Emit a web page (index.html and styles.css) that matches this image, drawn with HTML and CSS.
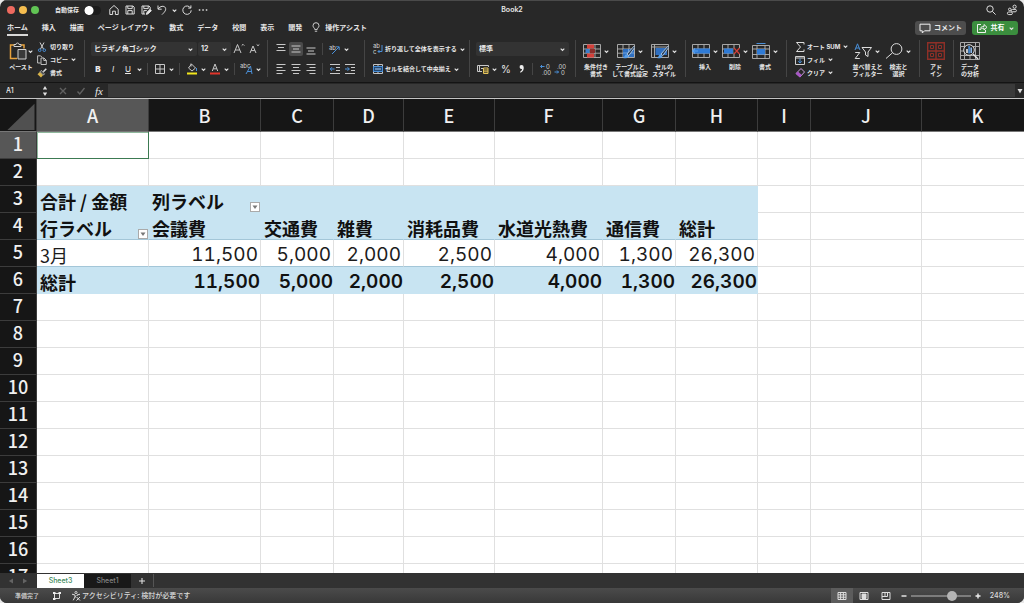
FILE: index.html
```html
<!DOCTYPE html>
<html lang="ja">
<head>
<meta charset="utf-8">
<title>Book2</title>
<link rel="stylesheet" href="styles.css">
</head>
<body>
<svg class="defs" aria-hidden="true">
  <symbol id="chev" viewBox="0 0 7 7"><path d="M1.7 2.6 3.5 4.4 5.3 2.6" fill="none" stroke="#e4e4e4" stroke-width="1.1"/></symbol>
  <symbol id="grid" viewBox="0 0 18 16"><path d="M.5 1.5h17v13H.5zM.5 6h17M.5 10.2h17M6 1.5v13M12 1.5v13" fill="none" stroke="#b4b4b4" stroke-width=".9"/></symbol>
</svg>
<div class="app">
  <header class="titlebar">
    <div class="title-left">
      <span class="light red"></span><span class="light yellow"></span><span class="light green"></span>
      <label class="autosave" for="autosave">自動保存</label>
      <input class="toggle" type="checkbox" id="autosave">
      <button class="tb" aria-label="ホーム"><svg viewBox="0 0 12 12"><path d="M1.8 5.3 6 1.5l4.2 3.8v5.2H7.4V7.2H4.6v3.3H1.8z"/></svg></button>
      <button class="tb" aria-label="保存"><svg viewBox="0 0 12 12"><path d="M2 2h7l1.2 1.2V10H2zM3.8 2v2.6h4.4V2M3.8 10V6.6h4.4V10"/></svg></button>
      <button class="tb" aria-label="名前を付けて保存"><svg viewBox="0 0 12 12"><path d="M5 10H2V2h7l1.2 1.2v2M3.8 2v2.6h4.4V2M3.8 10V6.6h3"/><path d="m6.3 10.4.6-2L10 5.3l1.4 1.3-3.2 3.2z" fill="#e8e8e8"/></svg></button>
      <button class="tb" aria-label="元に戻す"><svg viewBox="0 0 12 12"><path d="M2 1.5v3.7h3.7M2.2 5C4.2 1.8 8.2 1.6 9.3 3.6c1.2 2.2-.5 4.3-3.3 7"/></svg></button>
      <svg class="chev"><use href="#chev"/></svg>
      <button class="tb" aria-label="やり直し"><svg viewBox="0 0 12 12"><path d="M9.9 1.4v2.7H7.2M9.6 4A4.2 4.2 0 1 0 10.2 6.3"/></svg></button>
      <button class="tb" aria-label="その他"><svg viewBox="0 0 12 12"><path d="M1.8 6h1.5M5.3 6h1.5M8.800 6h1.500" stroke-width="1.5"/></svg></button>
    </div>
    <h1 class="doc">Book2</h1>
    <div class="title-right">
      <button class="tb" aria-label="検索"><svg viewBox="0 0 12 12"><circle cx="5" cy="5" r="3.2"/><path d="m7.4 7.4 3.2 3.2"/></svg></button>
      <button class="tb" aria-label="共同編集"><svg viewBox="0 0 12 12"><circle cx="8.6" cy="2.7" r="1.6"/><circle cx="3.8" cy="5.4" r="1.3"/><rect x="5.4" y="5.4" width="5" height="2.4" rx="1.2"/><rect x="1.4" y="8" width="5" height="2.6" rx="1.3"/></svg></button>
    </div>
  </header>

  <nav class="tabs">
    <a class="tab active" href="#home">ホーム</a>
    <a class="tab" href="#insert">挿入</a>
    <a class="tab" href="#draw">描画</a>
    <a class="tab" href="#layout">ページ レイアウト</a>
    <a class="tab" href="#formulas">数式</a>
    <a class="tab" href="#data">データ</a>
    <a class="tab" href="#review">校閲</a>
    <a class="tab" href="#view">表示</a>
    <a class="tab" href="#dev">開発</a>
    <a class="tab assist" href="#assist"><svg viewBox="0 0 8 11"><path d="M2.7 7.4C2.7 6 1 5.500 1 3.700a3 3 0 0 1 6 0c0 1.800-1.700 2.300-1.700 3.700zM2.800 9.200h2.400"/></svg>操作アシスト</a>
    <span class="fill"></span>
    <button class="pill comment"><svg viewBox="0 0 12 11"><path d="M1 1.200h10v6.600H5.500L3.300 10V7.800H1z"/></svg>コメント</button>
    <button class="pill share"><svg viewBox="0 0 12 11"><path d="M5 1.500H1.500v8h8V7M3.800 7C4 4.500 5.500 3.500 8 3.500V1.500L11 4.300 8 7V5.200C6 5.200 5 5.600 3.800 7z"/></svg>共有<svg class="chev"><use href="#chev"/></svg></button>
  </nav>

  <section class="ribbon" aria-label="ホーム">
    <div class="group clip">
      <button class="big"><span class="pic"><svg class="paste" viewBox="0 0 18 18"><path d="M6 3H1.500v13.500H8M11 3h4v3.500" fill="none" stroke="#e8a33d" stroke-width="1.500"/><path d="M5 4.500V2.500h2a1.500 1.500 0 0 1 3 0h2v2z" fill="#282828" stroke="#d0d0d0"/><path d="M9 7.500h8v9.500H9z" fill="#3a3a3a" stroke="#d0d0d0"/></svg><svg class="chev"><use href="#chev"/></svg></span><span class="cap">ペースト</span></button>
      <div class="stack">
        <button class="line"><svg class="mini" viewBox="0 0 10 10"><path d="M3 .5 6.500 7M7 .5 3.500 7" fill="none" stroke="#d0d0d0"/><circle cx="2.700" cy="8.200" r="1.300" fill="none" stroke="#4a90d9"/><circle cx="7.300" cy="8.200" r="1.300" fill="none" stroke="#4a90d9"/></svg>切り取り</button>
        <button class="line"><svg class="mini" viewBox="0 0 10 10"><path d="M3.500 8H.6V.8h3l1.500 1.500M4 3h3l2.300 2.300V9.500H4zM6.800 3v2.500h2.500" fill="none" stroke="#cfcfcf" stroke-width=".9"/></svg>コピー<svg class="chev"><use href="#chev"/></svg></button>
        <button class="line"><svg class="mini" viewBox="0 0 10 10"><path d="m9.300.8-3 3" stroke="#ddd" stroke-width="1.600"/><path d="M4.200 2.500 7.500 5.800 6.400 7 3 3.700z" fill="#282828" stroke="#ddd" stroke-width=".8"/><path d="M2.700 4 6 7.200 4 9.600.5 6.200z" fill="#d9b44a"/></svg>書式</button>
      </div>
    </div>

    <div class="group rows">
      <div class="row">
        <span class="combo name"><select aria-label="フォント"><option>ヒラギノ角ゴシック</option></select><svg class="chev"><use href="#chev"/></svg></span>
        <span class="combo size"><select aria-label="サイズ"><option>12</option></select><svg class="chev"><use href="#chev"/></svg></span>
        <button class="ib" aria-label="フォントを大きく"><svg viewBox="0 0 14 14"><path d="M2 11 5.500 2.500 9 11M3.300 8h4.400M9.700 3.600 11 2.300l1.300 1.300"/></svg></button>
        <button class="ib" aria-label="フォントを小さく"><svg viewBox="0 0 14 14"><path d="M3 11 6 4l3 7M4.100 8.600h3.800M9.700 2.500 11 3.700l1.300-1.200"/></svg></button>
      </div>
      <div class="row">
        <button class="ib"><b>B</b></button>
        <button class="ib"><i>I</i></button>
        <button class="ib"><u>U</u></button>
        <svg class="chev"><use href="#chev"/></svg>
        <span class="sep"></span>
        <button class="ib" aria-label="罫線"><svg viewBox="0 0 14 14"><path d="M2.500 2.500h9v9h-9zM7 2.500v9M2.500 7h9"/></svg></button>
        <svg class="chev"><use href="#chev"/></svg>
        <span class="sep"></span>
        <button class="ib" aria-label="塗りつぶし"><svg viewBox="0 0 14 14"><path d="m6.500 2 4 4-3.500 3L3.500 6zM6 1.500v3"/><path d="M11.500 6v3" stroke="#4a90d9"/><path d="M2 11.500h10" stroke="#f2e61c" stroke-width="2"/></svg></button>
        <svg class="chev"><use href="#chev"/></svg>
        <button class="ib" aria-label="文字の色"><svg viewBox="0 0 14 14"><path d="M4.300 9 7 2l2.700 7M5.200 6.800h3.600"/><path d="M2 11.500h10" stroke="#e0352b" stroke-width="2"/></svg></button>
        <svg class="chev"><use href="#chev"/></svg>
        <span class="sep"></span>
        <button class="ib" aria-label="ふりがな"><svg viewBox="0 0 14 14"><text x="0" y="6" class="tiny">abc</text><path d="M6 12 10.500 4l1.500 8M7.500 9.500h4" stroke="#4a90d9"/></svg></button>
        <svg class="chev"><use href="#chev"/></svg>
      </div>
    </div>

    <div class="group rows">
      <div class="row">
        <button class="ib" aria-label="上揃え"><svg viewBox="0 0 14 14"><path d="M2.500 2.500h9M4 5.500h6M2.500 8.500h9"/></svg></button>
        <button class="ib on" aria-label="上下中央揃え"><svg viewBox="0 0 14 14"><path d="M2.500 4h9M4 7h6M2.500 10h9"/></svg></button>
        <button class="ib" aria-label="下揃え"><svg viewBox="0 0 14 14"><path d="M2.500 6h9M4 9h6M2.500 12h9"/></svg></button>
        <span class="sep"></span>
        <button class="ib" aria-label="方向"><svg viewBox="0 0 14 14"><text x="1" y="8" class="tiny">ab</text><path d="m4 12 7-7M8 4.800h3.200V8" stroke="#4a90d9"/></svg></button>
        <svg class="chev"><use href="#chev"/></svg>
      </div>
      <div class="row">
        <button class="ib" aria-label="左揃え"><svg viewBox="0 0 14 14"><path d="M2.500 2.500h9M2.500 5.500h6M2.500 8.500h9M2.500 11.500h6"/></svg></button>
        <button class="ib" aria-label="中央揃え"><svg viewBox="0 0 14 14"><path d="M2.500 2.500h9M4 5.500h6M2.500 8.500h9M4 11.500h6"/></svg></button>
        <button class="ib" aria-label="右揃え"><svg viewBox="0 0 14 14"><path d="M2.500 2.500h9M5.500 5.500h6M2.500 8.500h9M5.500 11.500h6"/></svg></button>
        <span class="sep"></span>
        <button class="ib" aria-label="インデント解除"><svg viewBox="0 0 14 14"><path d="M2 2.500h10M8 5.500h4M8 8.500h4M2 11.500h10"/><path d="M6.500 7H2.200M4 5.200 2.200 7 4 8.800" stroke="#4a90d9"/></svg></button>
        <button class="ib" aria-label="インデント"><svg viewBox="0 0 14 14"><path d="M2 2.500h10M8 5.500h4M8 8.500h4M2 11.500h10"/><path d="M2 7h4.300M4.500 5.200 6.300 7 4.500 8.800" stroke="#4a90d9"/></svg></button>
      </div>
    </div>

    <div class="group rows wrap">
      <button class="line"><svg class="ico" viewBox="0 0 14 14"><text x="2" y="6" class="tiny">ab</text><text x="2" y="12" class="tiny">c</text><path d="M11 3v6.500H7M8.500 8 7 9.500 8.500 11" fill="none" stroke="#4a90d9"/></svg>折り返して全体を表示する<svg class="chev"><use href="#chev"/></svg></button>
      <button class="line"><svg class="ico" viewBox="0 0 14 14"><path d="M2.500 2.500h9v9h-9zM7 2.500v2M7 9.500v2" fill="none" stroke="#c4c4c4"/><path d="M2.500 4.500h9v5h-9z" fill="#23476f" stroke="#4a90d9"/><path d="M4 7h6" stroke="#a9cdf5"/></svg>セルを結合して中央揃え<svg class="chev"><use href="#chev"/></svg></button>
    </div>

    <div class="group rows">
      <div class="row">
        <span class="combo format"><select aria-label="表示形式"><option>標準</option></select><svg class="chev"><use href="#chev"/></svg></span>
      </div>
      <div class="row">
        <button class="ib" aria-label="通貨"><svg viewBox="0 0 14 14"><path d="M6 9.500H1.500v-6h11V5M3.500 3.500v6M5 6.500h2"/><path d="M7.500 6h4.500v5.500H7.500zM7.500 8h4.500M7.500 9.800h4.500" stroke="#e6c55a"/></svg></button>
        <svg class="chev"><use href="#chev"/></svg>
        <button class="ib" aria-label="パーセント"><span class="pct">%</span></button>
        <button class="ib" aria-label="桁区切り"><svg viewBox="0 0 14 14"><path d="M7.500 3a1.900 1.900 0 1 0 .6 3.700C8 8 7.300 9 6 9.800l.5.900C9 9.500 10 7.500 9.700 5.200A2.200 2.200 0 0 0 7.500 3z" fill="#eee" stroke="none"/></svg></button>
        <span class="sep"></span>
        <button class="ib" aria-label="小数点以下を増やす"><svg viewBox="0 0 14 14"><path d="M6.500 4.500h-4M4 3 2.500 4.500 4 6" stroke="#4a90d9"/><text x="8" y="7" class="tiny">0</text><text x="4" y="13" class="tiny">.00</text></svg></button>
        <button class="ib" aria-label="小数点以下を減らす"><svg viewBox="0 0 14 14"><path d="M1.500 10h4M4 8.500 5.500 10 4 11.500" stroke="#4a90d9"/><text x="4" y="7" class="tiny">.00</text><text x="8" y="13" class="tiny">0</text></svg></button>
      </div>
    </div>

    <div class="group styles">
      <button class="big"><span class="pic"><svg class="art" viewBox="0 0 18 16"><use href="#grid"/><path d="M4 1.500h7v4H4zM4 10.500h7v4H4z" fill="#d4403a"/><path d="M2.500 6h4v4h-4z" fill="#3f7fca"/><path d="M7 6h5v4H7z" fill="#8d2d2b"/></svg><svg class="chev"><use href="#chev"/></svg></span><span class="cap">条件付き<br>書式</span></button>
      <button class="big"><span class="pic"><svg class="art" viewBox="0 0 18 16"><use href="#grid"/><path d="M6 6h11v8H6z" fill="#2f6fc0"/><path d="M6 10h11M11.500 6v8" stroke="#8ab7ea" stroke-width=".7"/><path d="M16.800 3.300 10 11l1.800 1.600 6-8.200z" fill="#2a3f58" stroke="#c4daf2" stroke-width=".8"/><path d="M9.500 11.300c-2 .2-1.500 2.700-3.500 3.700 2.500.7 5.300.2 5.400-2z" fill="#5a9fe8"/></svg><svg class="chev"><use href="#chev"/></svg></span><span class="cap">テーブルと<br>して書式設定</span></button>
      <button class="big"><span class="pic"><svg class="art" viewBox="0 0 18 16"><path d="M.5 1.500h17v13H.5zM.5 4h17M3.500 1.500v13" fill="none" stroke="#b4b4b4" stroke-width=".9"/><path d="M4.500 5H16v7H4.500z" fill="#2f6fc0"/><path d="M16.800 3.300 10 11l1.800 1.600 6-8.200z" fill="#2a3f58" stroke="#c4daf2" stroke-width=".8"/><path d="M9.500 11.300c-2 .2-1.500 2.700-3.500 3.700 2.500.7 5.300.2 5.400-2z" fill="#5a9fe8"/></svg><svg class="chev"><use href="#chev"/></svg></span><span class="cap">セルの<br>スタイル</span></button>
    </div>

    <div class="group cells">
      <button class="big"><span class="pic"><svg class="art" viewBox="0 0 18 16"><use href="#grid"/><path d="M2 5.500h16v5H2z" fill="#2f7bd6"/><path d="M6 8H.5M3 5.500.5 8 3 10.500" fill="none" stroke="#5aa0ee" stroke-width="1.200"/></svg><svg class="chev"><use href="#chev"/></svg></span><span class="cap">挿入</span></button>
      <button class="big"><span class="pic"><svg class="art" viewBox="0 0 18 16"><use href="#grid"/><path d="M2 5.500h9v5H2z" fill="#2f7bd6"/><path d="M11.500 5h6.500v6h-6.500z" fill="#282828"/><path d="m12 5 5.500 6M17.500 5 12 11" stroke="#d4403a" stroke-width="1.200"/></svg><svg class="chev"><use href="#chev"/></svg></span><span class="cap">削除</span></button>
      <button class="big"><span class="pic"><svg class="art" viewBox="0 0 18 16"><path d="M.5 2.500h17v13H.5zM.5 6h17M.5 11.500h17M5 2.500v13M13 2.500v13" fill="none" stroke="#b4b4b4" stroke-width=".9"/><path d="M5 6h8v5.500H5z" fill="#2f7bd6"/><path d="M4.500.5h9" stroke="#4a90d9"/></svg><svg class="chev"><use href="#chev"/></svg></span><span class="cap">書式</span></button>
    </div>

    <div class="group edit">
      <div class="stack">
        <button class="line"><svg class="ico" viewBox="0 0 14 14"><path d="M11 4.500V2.500H3.500L7.500 7l-4 4.500H11v-2" fill="none" stroke="#ddd"/></svg>オート SUM<svg class="chev"><use href="#chev"/></svg></button>
        <button class="line"><svg class="ico" viewBox="0 0 14 14"><path d="M2.500 3.500h9v8h-9zM2.500 5h9" fill="none" stroke="#cfcfcf"/><path d="M7 5.500v4.500M5.200 8.300 7 10l1.800-1.700" fill="none" stroke="#4a90d9"/></svg>フィル<svg class="chev"><use href="#chev"/></svg></button>
        <button class="line"><svg class="ico" viewBox="0 0 14 14"><path d="m8 2.500 3.500 3.500L7 11 3 7.500z" fill="none" stroke="#c9a0dc"/><path d="m5 5.500 3.800 3.600L7 11.500 2.800 7.800z" fill="#a855c7"/></svg>クリア<svg class="chev"><use href="#chev"/></svg></button>
      </div>
      <button class="big"><span class="pic"><svg class="art" viewBox="0 0 18 16"><path d="M1 7 3.500.8 6 7M1.800 5h3.400" fill="none" stroke="#4a90d9"/><path d="M1.200 9.500h4.600l-4.600 6h4.600" fill="none" stroke="#ddd"/><path d="M8 4.500h9.500l-3.500 4.500v4.500l-2.500-1.500V9z" fill="none" stroke="#ddd"/></svg><svg class="chev"><use href="#chev"/></svg></span><span class="cap">並べ替えと<br>フィルター</span></button>
      <button class="big"><span class="pic"><svg class="art" viewBox="0 0 18 16"><circle cx="11.500" cy="6" r="5.400" fill="none" stroke="#ddd"/><path d="M7.500 9.800 1 15.500" stroke="#ddd"/></svg><svg class="chev"><use href="#chev"/></svg></span><span class="cap">検索と<br>選択</span></button>
    </div>

    <div class="group solo">
      <button class="big"><span class="pic"><svg class="tile" viewBox="0 0 18 18"><path d="M.7.7h16.600v16.600H.7zM9 1v16M1 9h16" fill="none" stroke="#8f2f27" stroke-width="1.400"/><path d="M3.500 3.500h3v3h-3zM11.500 3.500h3v3h-3zM3.500 11.500h3v3h-3zM11.500 11.500h3v3h-3z" fill="none" stroke="#8f2f27"/></svg></span><span class="cap">アド<br>イン</span></button>
    </div>
    <div class="group solo">
      <button class="big"><span class="pic"><svg class="tile wide" viewBox="0 0 20 18"><path d="M.5.5h19v17H.5zM.5 4.500h19M.5 13.500h19M4.500.5v17M15.500.5v17M.5 9h4M10 13.500v4" fill="none" stroke="#a8a8a8"/><circle cx="9" cy="8" r="5.300" fill="#282828" stroke="#e4e4e4"/><path d="m13 12 5 5" stroke="#e4e4e4" stroke-width="1.400"/><path d="M6.200 7h1.600v4H6.200z" fill="#eee"/><path d="M8.300 4h1.600v7.500H8.300z" fill="#4a90d9"/><path d="M10.400 5.500H12V11h-1.600z" fill="#8ab7ea"/></svg></span><span class="cap">データ<br>の分析</span></button>
    </div>
  </section>

  <div class="formula">
    <input class="namebox" aria-label="名前ボックス" value="A1">
    <svg class="step" viewBox="0 0 6 12"><path d="M.8 4.500 3 1l2.200 3.500zM.8 7.500 3 11l2.200-3.500z" fill="#e0e0e0"/></svg>
    <button class="fb" aria-label="キャンセル"><svg viewBox="0 0 10 10"><path d="m2 2 6 6M8 2 2 8" stroke="#606060" stroke-width="1.400"/></svg></button>
    <button class="fb" aria-label="入力"><svg viewBox="0 0 10 10"><path d="m1.500 5.500 2.300 2.500L8.500 2" fill="none" stroke="#606060" stroke-width="1.400"/></svg></button>
    <button class="fb fx">fx</button>
    <input class="entry" aria-label="数式バー">
    <button class="drop" aria-label="展開"><svg viewBox="0 0 6 6"><path d="M.5 1h5L3 5.500z" fill="#ddd"/></svg></button>
  </div>

  <main class="sheet">
    <table>
      <colgroup><col class="c0"><col class="ca"><col class="ca"><col class="cc"><col class="cd"><col class="ce"><col class="cf"><col class="cc"><col class="ch"><col class="ci"><col class="cj"><col class="ca"></colgroup>
      <thead>
        <tr><th class="corner" aria-label="すべて選択"><svg viewBox="0 0 37 33"><path d="M35 5v27H7z" fill="#505050"/></svg></th><th class="sel">A</th><th>B</th><th>C</th><th>D</th><th>E</th><th>F</th><th>G</th><th>H</th><th>I</th><th>J</th><th>K</th></tr>
      </thead>
      <tbody>
        <tr><th class="sel">1</th><td class="cursor"></td><td><td><td><td><td><td><td><td><td><td></tr>
        <tr><th>2</th><td><td><td><td><td><td><td><td><td><td><td></tr>
        <tr class="pivot"><th>3</th><td>合計 / 金額</td><td><div class="lab">列ラベル<button class="filter" aria-label="列ラベルのフィルター"><svg viewBox="0 0 8 8"><path d="M1.500 2.500h5L4 6z" fill="#777"/></svg></button></div></td><td><td><td><td><td><td></td><td class="off"><td class="off"><td class="off"></tr>
        <tr class="pivot under"><th>4</th><td><div class="lab">行ラベル<button class="filter" aria-label="行ラベルのフィルター"><svg viewBox="0 0 8 8"><path d="M1.500 2.500h5L4 6z" fill="#777"/></svg></button></div></td><td>会議費</td><td>交通費</td><td>雑費</td><td>消耗品費</td><td>水道光熱費</td><td>通信費</td><td>総計</td><td class="off"><td class="off"><td class="off"></tr>
        <tr class="plain under"><th>5</th><td>3月</td><td class="n">11,500</td><td class="n">5,000</td><td class="n">2,000</td><td class="n">2,500</td><td class="n">4,000</td><td class="n">1,300</td><td class="n">26,300</td><td class="off"><td class="off"><td class="off"></tr>
        <tr class="pivot"><th>6</th><td>総計</td><td class="n">11,500</td><td class="n">5,000</td><td class="n">2,000</td><td class="n">2,500</td><td class="n">4,000</td><td class="n">1,300</td><td class="n">26,300</td><td class="off"><td class="off"><td class="off"></tr>
        <tr><th>7</th><td><td><td><td><td><td><td><td><td><td><td></tr>
        <tr><th>8</th><td><td><td><td><td><td><td><td><td><td><td></tr>
        <tr><th>9</th><td><td><td><td><td><td><td><td><td><td><td></tr>
        <tr><th>10</th><td><td><td><td><td><td><td><td><td><td><td></tr>
        <tr><th>11</th><td><td><td><td><td><td><td><td><td><td><td></tr>
        <tr><th>12</th><td><td><td><td><td><td><td><td><td><td><td></tr>
        <tr><th>13</th><td><td><td><td><td><td><td><td><td><td><td></tr>
        <tr><th>14</th><td><td><td><td><td><td><td><td><td><td><td></tr>
        <tr><th>15</th><td><td><td><td><td><td><td><td><td><td><td></tr>
        <tr><th>16</th><td><td><td><td><td><td><td><td><td><td><td></tr>
        <tr><th>17</th><td><td><td><td><td><td><td><td><td><td><td></tr>
      </tbody>
    </table>
  </main>

  <div class="sheettabs">
    <button class="nav" aria-label="前のシート"><svg viewBox="0 0 6 6"><path d="M5 .5v5L.8 3z" fill="#646464"/></svg></button>
    <button class="nav" aria-label="次のシート"><svg viewBox="0 0 6 6"><path d="M1 .5v5L5.200 3z" fill="#646464"/></svg></button>
    <button class="st current">Sheet3</button>
    <button class="st">Sheet1</button>
    <button class="add" aria-label="シートを追加"><svg viewBox="0 0 8 8"><path d="M4 1v6M1 4h6" stroke="#ddd" stroke-width="1.100"/></svg></button>
  </div>

  <footer class="status">
    <span class="ready">準備完了</span>
    <svg class="si" viewBox="0 0 10 10"><path d="M2.500 2.500h5v5h-5z" fill="none" stroke="#ddd"/><path d="M1 1h2.500v2H1zM6.500 1H9v2H6.500zM1 7h2.500v2H1z" fill="#eee"/></svg>
    <button class="access"><svg class="si" viewBox="0 0 10 10"><circle cx="5" cy="1.600" r="1.100" fill="none" stroke="#ddd" stroke-width=".9"/><path d="M1 3.200 4 4v2L2.200 9.300M9 3.200 6 4v1M4 6l1-.5M5.500 6l3.500 3.500M9 6 5.500 9.500" fill="none" stroke="#ddd"/></svg>アクセシビリティ: 検討が必要です</button>
    <span class="fill"></span>
    <button class="vw on" aria-label="標準"><svg viewBox="0 0 10 10"><path d="M1 1.500h8v7H1zM1 3.800h8M1 6.200h8M3.600 1.500v7M6.400 1.500v7"/></svg></button>
    <button class="vw" aria-label="ページ レイアウト"><svg viewBox="0 0 10 10"><path d="M1 1.500h8v7H1z"/><path d="M3 3h4v4.500H3z" fill="#ddd"/></svg></button>
    <button class="vw" aria-label="改ページ プレビュー"><svg viewBox="0 0 10 10"><path d="M1 1.500h8v7H1zM4 1.500v4H1M6.500 1.500v4H4"/></svg></button>
    <button class="zb" aria-label="縮小"><svg viewBox="0 0 6 6"><path d="M.5 3h5" stroke="#eee" stroke-width="1.400"/></svg></button>
    <input class="zoom" type="range" aria-label="ズーム" min="0" max="100" value="72">
    <button class="zb" aria-label="拡大"><svg viewBox="0 0 6 6"><path d="M.5 3h5M3 .5v5" stroke="#eee" stroke-width="1.400"/></svg></button>
    <span class="pc">248%</span>
  </footer>
</div>
</body>
</html>
```
FILE: styles.css
```css
* { box-sizing: border-box; }
html, body { height: 100%; }
body {
  margin: 0;
  background: #e8e8e8;
  color: #e8e8e8;
  font: 500 7px/8px Inter, "Noto Sans CJK JP", sans-serif;
}
button, input, select { font: inherit; color: inherit; }
button {
  margin: 0;
  padding: 0;
  border: 0;
  background: none;
}
svg { display: block; flex: none; }
.defs { position: absolute; width: 0; height: 0; }
.fill { flex: 1; }
.chev { width: 7px; height: 7px; flex: none; }

.app {
  display: flex;
  flex-direction: column;
  height: 100vh;
  overflow: hidden;
  border-radius: 7px;
  background: #282828;
  white-space: nowrap;
}

/* Title bar */
.titlebar {
  display: grid;
  grid-template-columns: 1fr auto 1fr;
  align-items: center;
  height: 19px;
  border-top: 1px solid #4a4a4a;
}
.title-left, .title-right { display: flex; align-items: center; gap: 4px; }
.title-left { padding-left: 7px; }
.title-right { justify-content: flex-end; gap: 9px; padding-right: 6px; }
.light { width: 8px; height: 8px; border-radius: 50%; }
.red { background: #ee6a5f; }
.yellow { background: #f5bd4f; }
.green { background: #61c454; }
.autosave { margin-left: 12px; font-size: 6px; font-weight: 700; }
.toggle {
  appearance: none;
  width: 17px;
  height: 9px;
  margin: 0 3px 0 1px;
  border-radius: 5px;
  background: radial-gradient(circle at 5px 50%, #fff 4px, #1b1b1b 5px);
}
.tb { width: 12px; height: 12px; }
.tb svg { width: 12px; height: 12px; fill: none; stroke: #dcdcdc; }
.title-left .chev { margin: 0 -1px; }
.doc { margin: 0; font-size: 7px; font-weight: 600; }

/* Ribbon tabs */
.tabs {
  display: flex;
  align-items: center;
  gap: 14px;
  height: 18px;
  padding: 0 6px 0 7px;
}
.tab {
  height: 16px;
  padding-top: 4px;
  border-bottom: 2px solid transparent;
  color: #e8e8e8;
  font-weight: 700;
  text-decoration: none;
}
.tab.active { border-color: #d8d8d8; }
.assist { display: flex; gap: 5px; margin-left: -4px; }
.assist svg { width: 8px; height: 11px; margin-top: -2px; fill: none; stroke: #d0d0d0; }
.pill {
  display: flex;
  align-items: center;
  justify-content: center;
  gap: 3px;
  height: 14px;
  border-radius: 3px;
  font-weight: 700;
}
.pill > svg:first-child { width: 12px; height: 11px; fill: none; stroke: #f0f0f0; }
.comment { width: 51px; background: #4d4d4d; }
.share { width: 46px; margin-left: -8px; background: #3b8e3e; color: #fff; }

/* Ribbon */
.ribbon {
  display: grid;
  grid-template-columns: 84px 183px 97px 105px 106px 110px 101px 133px 34px 1fr;
  height: 45px;
  font-size: 6px;
  font-weight: 700;
}
.group {
  display: flex;
  min-width: 0;
  background: linear-gradient(#454545, #454545) 0 3px / 1px 37px no-repeat;
}
.clip { padding-left: 5px; background: none; }
.rows { flex-direction: column; gap: 6px; padding: 5px 0 0 7px; }
.row { display: flex; align-items: center; gap: 1px; height: 14px; }
.sep { width: 1px; height: 12px; margin: 0 4px 0 3px; background: #454545; }
.ib {
  display: flex;
  align-items: center;
  justify-content: center;
  width: 14px;
  height: 14px;
  font-size: 8px;
}
.ib svg { width: 14px; height: 14px; fill: none; stroke: #c8c8c8; }
.ib.on { border-radius: 2px; background: #4a4a4a; }
.ib i, .ib u { font-weight: 400; }
.ib .pct { font-size: 10px; font-weight: 400; }
.tiny { fill: #d4d4d4; stroke: none; font-size: 6px; font-weight: 400; }
.combo {
  display: flex;
  align-items: center;
  height: 14px;
  padding-right: 3px;
  border-radius: 2px;
  background: #333;
  font-size: 7px;
}
.combo select {
  flex: 1;
  min-width: 0;
  height: 14px;
  padding: 0 0 0 3px;
  border: 0;
  appearance: none;
  background: transparent;
}
.combo.name { width: 106px; }
.combo.size { width: 33px; }
.combo.format { width: 93px; }

.stack { display: flex; flex-direction: column; padding-top: 3px; }
.line { display: flex; align-items: center; height: 13px; text-align: left; }
.mini { width: 10px; height: 10px; margin-right: 3px; }
.ico { width: 14px; height: 14px; }
.line .chev { margin-left: 2px; }
.rows .line { height: 14px; }

.big {
  display: flex;
  flex-direction: column;
  align-items: center;
  width: 34px;
  padding-top: 5px;
}
.pic { display: flex; align-items: center; gap: 2px; height: 18px; }
.cap { margin-top: 3px; line-height: 7px; text-align: center; }
.art { width: 18px; height: 16px; }
.paste, .tile { width: 18px; height: 18px; }
.tile.wide { width: 20px; }
.clip .big { width: 32px; }
.clip .pic { gap: 0; }
.styles { padding-left: 4px; }
.cells { padding-left: 5px; }
.cells .big { width: 30px; }
.edit { padding-left: 7px; }
.edit .stack { width: 59px; }
.edit .big { width: 31px; }

/* Formula bar */
.formula {
  display: flex;
  align-items: center;
  height: 17px;
  border-top: 1px solid #141414;
  border-bottom: 1px solid #c4c4c4;
}
.namebox {
  width: 42px;
  height: 13px;
  padding: 0 0 0 6px;
  border: 0;
  background: none;
}
.step { width: 6px; height: 12px; margin-right: 6px; }
.fb { display: flex; justify-content: center; width: 18px; }
.fb svg { width: 10px; height: 10px; }
.fx { font: italic 11px/12px "Liberation Serif", serif; }
.entry {
  flex: 1;
  min-width: 0;
  height: 13px;
  border: 0;
  background: #3a3a3a;
}
.drop { width: 9px; }
.drop svg { width: 6px; height: 6px; margin: auto; }

/* Worksheet */
.sheet { flex: 1; min-height: 0; overflow: hidden; background: #fff; }
table {
  width: 1034px;
  table-layout: fixed;
  border-spacing: 0;
  font: 18px/22px "Noto Sans CJK JP", sans-serif;
}
.c0 { width: 37px; }
.ca { width: 112px; }
.cc { width: 73px; }
.cd { width: 70px; }
.ce { width: 91px; }
.cf { width: 108px; }
.ch { width: 82px; }
.ci { width: 53px; }
.cj { width: 111px; }
th {
  padding: 0 0 4px;
  border-right: 1px solid #3c3c3c;
  border-bottom: 1px solid #3c3c3c;
  background: #161616;
  color: #f0f0f0;
  font-weight: 500;
}
thead th { height: 33px; padding: 0; border-bottom-color: #777; }
th.sel { background: #575757; }
.corner svg { width: 37px; height: 32px; }
td {
  height: 27px;
  padding: 4px 0 0 3px;
  border-right: 1px solid #e0e0e0;
  border-bottom: 1px solid #e0e0e0;
  color: #1c1c1c;
}
.cursor { border-color: #3c7a52; box-shadow: inset 1px 1px #8fb89d; }
.pivot td:not(.off) {
  border-color: #c8e4f2;
  background: #c8e4f2;
  color: #111;
  font-weight: 700;
}
.under td:not(.off) { border-bottom-color: #a3c6d8; }
td.n {
  padding: 4px 2px 0 0;
  font-family: Inter, sans-serif;
  font-size: 19px;
  font-variant-numeric: tabular-nums;
  text-align: right;
}
.pivot td.n:not(.off) { padding-right: 0; font-weight: 600; }
.lab { display: flex; align-items: flex-end; justify-content: space-between; }
.filter {
  width: 10px;
  height: 10px;
  border: 1px solid #aaa;
  background: #fff;
}
.filter svg { width: 8px; height: 8px; }

/* Sheet tabs */
.sheettabs {
  display: flex;
  align-items: center;
  height: 15px;
  background: #323232;
}
.nav { width: 14px; }
.nav svg { width: 6px; height: 6px; margin: auto; }
.nav:first-child { margin-left: 4px; }
.nav + .st { margin-left: 5px; }
.st {
  width: 47px;
  height: 14px;
  background: #191919;
  color: #858585;
  font-size: 7px;
}
.st.current { background: #fff; color: #3f8a5c; }
.add { width: 23px; height: 13px; border-right: 1px solid #555; }
.add svg { width: 8px; height: 8px; margin: auto; }

/* Status bar */
.status {
  display: flex;
  align-items: center;
  height: 15px;
  padding: 0 14px 0 15px;
  background: linear-gradient(#4b4b4b, #383838);
  color: #dcdcdc;
}
.ready { margin-right: 13px; font-size: 6px; }
.si { width: 10px; height: 10px; }
.access { display: flex; align-items: center; gap: 1px; margin-left: 9px; }
.vw { width: 22px; height: 15px; }
.vw svg { width: 10px; height: 10px; margin: auto; fill: none; stroke: #ddd; }
.vw.on { background: #5c5c5c; }
.zb { width: 14px; }
.zb svg { width: 6px; height: 6px; margin: auto; }
.zoom {
  width: 60px;
  height: 10px;
  margin: 0;
  appearance: none;
  background: linear-gradient(#7c7c7c, #7c7c7c) center / 100% 2px no-repeat;
}
.zoom::-webkit-slider-thumb {
  appearance: none;
  width: 10px;
  height: 10px;
  border-radius: 50%;
  background: #b4b4b4;
}
.pc { margin-left: 5px; }
```
